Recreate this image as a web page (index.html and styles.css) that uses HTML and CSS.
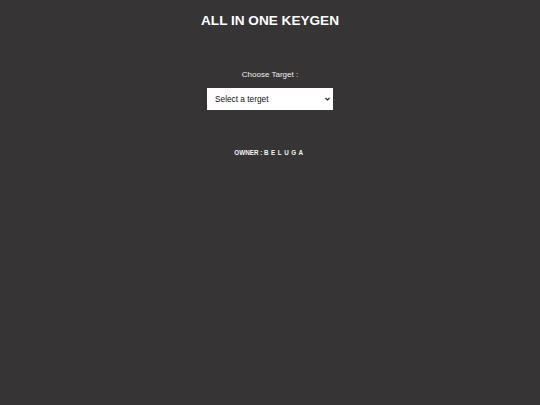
FILE: index.html
```html
<!DOCTYPE html>
<html>
<head>
<meta charset="utf-8">
<link rel="stylesheet" href="styles.css">
</head>
<body>
<div class="page">
  <h1 class="title">ALL IN ONE KEYGEN</h1>
  <label class="label" for="target">Choose Target :</label>
  <div class="select-wrap">
    <select id="target" class="select">
      <option>Select a terget</option>
    </select>
    <svg class="arrow" width="5" height="4" viewBox="0 0 5 4"><path d="M0.5 1 L2.5 3 L4.5 1" fill="none" stroke="#222" stroke-width="1.1"/></svg>
  </div>
  <p class="owner">OWNER : <span class="name">BELUGA</span></p>
</div>
</body>
</html>
```
FILE: styles.css
```css
html, body {
  margin: 0;
  padding: 0;
  background: #363435;
  height: 100%;
}
.page {
  display: flex;
  flex-direction: column;
  align-items: center;
  font-family: "Liberation Sans", Arial, sans-serif;
  color: #ffffff;
}
.title {
  margin: 13px 0 0 0;
  font-size: 13.6px;
  font-weight: bold;
  line-height: 16px;
}
.label {
  margin-top: 41px;
  font-size: 8px;
  line-height: 10px;
  color: #f0f0f0;
}
.select-wrap {
  position: relative;
  margin-top: 8px;
  width: 126px;
  height: 22px;
}
.select {
  appearance: none;
  -webkit-appearance: none;
  display: block;
  width: 126px;
  height: 22px;
  font-family: "Liberation Sans", Arial, sans-serif;
  font-size: 8.3px;
  background: #ffffff;
  color: #111;
  border: none;
  border-radius: 0;
  padding: 0 12px 0 8px;
  margin: 0;
}
.arrow {
  position: absolute;
  right: 3px;
  top: 9px;
  pointer-events: none;
}
.owner {
  margin: 39px 0 0 0;
  font-size: 6.3px;
  font-weight: bold;
  line-height: 8px;
  color: #f4f4f4;
}
.name {
  letter-spacing: 2.5px;
}
```
